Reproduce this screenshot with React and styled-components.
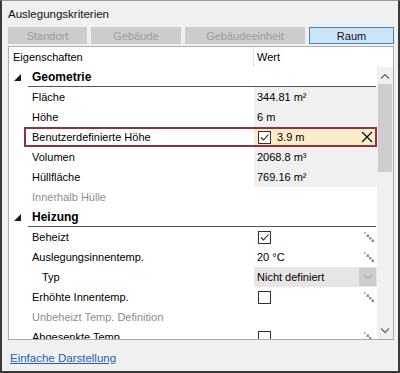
import React from "react"
import styled, { createGlobalStyle } from "styled-components"

const GlobalStyle = createGlobalStyle`
  html, body {
    margin: 0;
    padding: 0;
    background: #f0f0f0;
  }
  body {
    font-family: "Liberation Sans", Arial, sans-serif;
    font-size: 11px;
    color: #000;
  }
`

const tabs = [
  { label: "Standort" },
  { label: "Gebäude" },
  { label: "Gebäudeeinheit" },
  { label: "Raum", active: true },
]

const rows = [
  { type: "category", label: "Geometrie" },
  { label: "Fläche", value: "344.81 m²", tone: "readonly" },
  { label: "Höhe", value: "6 m", tone: "readonly" },
  { label: "Benutzerdefinierte Höhe", value: "3.9 m", tone: "edit", check: true, clear: true, selected: true },
  { label: "Volumen", value: "2068.8 m³", tone: "readonly" },
  { label: "Hüllfläche", value: "769.16 m²", tone: "readonly" },
  { label: "Innerhalb Hülle", muted: true },
  { type: "category", label: "Heizung" },
  { label: "Beheizt", check: true, link: true },
  { label: "Auslegungsinnentemp.", value: "20 °C", link: true },
  { label: "Typ", value: "Nicht definiert", tone: "combo", indent: true, combo: true },
  { label: "Erhöhte Innentemp.", check: false, link: true },
  { label: "Unbeheizt Temp. Definition", muted: true },
  { label: "Abgesenkte Temp.", check: false, link: true },
]

const Chevron = ({ up, color = "#606060" }) => (
  <svg width="10" height="6" viewBox="0 0 10 6">
    <path
      d={up ? "M1 5.5 L5 1.5 L9 5.5" : "M1 0.5 L5 4.5 L9 0.5"}
      fill="none"
      stroke={color}
      strokeWidth="1.2"
    />
  </svg>
)

const CheckMark = () => (
  <svg width="11" height="11" viewBox="0 0 11 11">
    <path d="M2 5.5 L4.5 8 L9.5 2.5" fill="none" stroke="#222" strokeWidth="1.1" />
  </svg>
)

const ClearIcon = () => (
  <svg width="12" height="12" viewBox="0 0 12 12">
    <path d="M1 1 L11 11 M11 1 L1 11" stroke="#111" strokeWidth="1.4" />
  </svg>
)

const LinkDots = () => (
  <svg width="10" height="10" viewBox="0 0 10 10">
    <rect x="0" y="0" width="2" height="2" fill="#b5b5b5" />
    <rect x="2.5" y="2.5" width="2.5" height="2.5" fill="#8f8f8f" />
    <rect x="5" y="5" width="2.5" height="2.5" fill="#9a9a9a" />
    <rect x="7.5" y="7.5" width="2.5" height="2.5" fill="#8a8a8a" />
  </svg>
)

const Expander = () => (
  <svg width="7" height="7" viewBox="0 0 7 7">
    <polygon points="7,0 7,7 0,7" fill="#1a1a1a" />
  </svg>
)

export default function App() {
  return (
    <>
      <GlobalStyle />
      <Window>
        <Title>Auslegungskriterien</Title>
        <TabBar>
          {tabs.map((t) => (
            <Tab key={t.label} $active={t.active}>
              {t.label}
            </Tab>
          ))}
        </TabBar>
        <Panel>
          <HeaderRow>
            <HeaderName>Eigenschaften</HeaderName>
            <HeaderValue>Wert</HeaderValue>
          </HeaderRow>
          <Body>
            <RowList>
              {rows.map((r) =>
                r.type === "category" ? (
                  <CategoryRow key={r.label}>
                    <Gutter>
                      <Expander />
                    </Gutter>
                    <CategoryLabel>{r.label}</CategoryLabel>
                  </CategoryRow>
                ) : (
                  <Row key={r.label} $selected={r.selected}>
                    <Gutter />
                    <Label $muted={r.muted} $indent={r.indent}>
                      {r.label}
                    </Label>
                    <Value $tone={r.tone}>
                      <ValueMain>
                        {r.check !== undefined && <Checkbox>{r.check && <CheckMark />}</Checkbox>}
                        {r.value && <span>{r.value}</span>}
                      </ValueMain>
                      {r.clear && (
                        <ClearButton>
                          <ClearIcon />
                        </ClearButton>
                      )}
                      {r.link && (
                        <LinkMark>
                          <LinkDots />
                        </LinkMark>
                      )}
                      {r.combo && (
                        <ComboButton>
                          <Chevron color="#b0b0b0" />
                        </ComboButton>
                      )}
                    </Value>
                  </Row>
                )
              )}
            </RowList>
            <ScrollBar>
              <ScrollArrow>
                <Chevron up />
              </ScrollArrow>
              <ScrollTrack>
                <Thumb />
              </ScrollTrack>
              <ScrollArrow>
                <Chevron />
              </ScrollArrow>
            </ScrollBar>
          </Body>
        </Panel>
        <Footer>
          <FooterLink href="#">Einfache Darstellung</FooterLink>
        </Footer>
      </Window>
    </>
  )
}

const Window = styled.div`
  width: 400px;
  height: 373px;
  box-sizing: border-box;
  border: 2px solid #3a3a3a;
  border-top: 1px solid #9a9a9a;
  background: #f0f0f0;
  padding: 0 4px 0 6px;
  display: flex;
  flex-direction: column;
`

const Title = styled.div`
  height: 26px;
  line-height: 26px;
  font-size: 11.5px;
  color: #111;
`

const TabBar = styled.div`
  display: grid;
  grid-template-columns: 79px 90px 120px 1fr;
  column-gap: 4px;
  height: 17px;
  margin-bottom: 2px;
`

const Tab = styled.div`
  box-sizing: border-box;
  display: flex;
  align-items: center;
  justify-content: center;
  background: ${(p) => (p.$active ? "#cce4f7" : "#cccccc")};
  border: 1px solid ${(p) => (p.$active ? "#4a82b0" : "#cccccc")};
  color: ${(p) => (p.$active ? "#111" : "#9c9c9c")};
`

const Panel = styled.div`
  height: 294px;
  box-sizing: border-box;
  border: 1px solid #acacac;
  background: #fff;
  display: flex;
  flex-direction: column;
`

const HeaderRow = styled.div`
  display: flex;
  height: 20px;
  align-items: stretch;
`

const HeaderName = styled.div`
  width: 245px;
  padding-left: 4px;
  box-sizing: border-box;
  display: flex;
  align-items: center;
  border-right: 1px solid #e3e3e3;
`

const HeaderValue = styled.div`
  padding-left: 3px;
  display: flex;
  align-items: center;
`

const Body = styled.div`
  flex: 1;
  display: flex;
  min-height: 0;
`

const RowList = styled.div`
  flex: 1;
  overflow: hidden;
`

const Gutter = styled.div`
  display: flex;
  align-items: center;
  justify-content: flex-end;
  padding-right: 7px;
`

const CategoryRow = styled.div`
  display: grid;
  grid-template-columns: 19px 1fr;
  height: 20px;
`

const CategoryLabel = styled.div`
  display: flex;
  align-items: center;
  padding-left: 4px;
  font-weight: bold;
  font-size: 12px;
  border-bottom: 1px solid #555;
  margin-right: 1px;
`

const Row = styled.div`
  position: relative;
  display: grid;
  grid-template-columns: 19px 226px 1fr;
  height: 20px;

  &::after {
    content: "";
    display: ${(p) => (p.$selected ? "block" : "none")};
    position: absolute;
    left: 15px;
    right: 0;
    top: 0;
    bottom: 0;
    border: 2px solid #93303f;
    pointer-events: none;
  }
`

const Label = styled.div`
  display: flex;
  align-items: center;
  padding-left: ${(p) => (p.$indent ? "14px" : "4px")};
  color: ${(p) => (p.$muted ? "#8d8d8d" : "#000")};
  white-space: nowrap;
`

const toneColors = {
  readonly: "#f0f0f0",
  edit: "#fcecc9",
  combo: "#e6e6e6",
}

const Value = styled.div`
  display: flex;
  align-items: center;
  justify-content: space-between;
  padding-left: 3px;
  background: ${(p) => toneColors[p.$tone] || "#fff"};
  white-space: nowrap;
`

const ValueMain = styled.div`
  display: flex;
  align-items: center;
  gap: 6px;
`

const Checkbox = styled.div`
  width: 13px;
  height: 13px;
  box-sizing: border-box;
  border: 1px solid #333;
  background: #fff;
  margin-left: 1px;
  display: flex;
  align-items: center;
  justify-content: center;
`

const ClearButton = styled.div`
  display: flex;
  margin-right: 4px;
`

const LinkMark = styled.div`
  display: flex;
  align-self: flex-start;
  margin-top: 5px;
  margin-right: 3px;
`

const ComboButton = styled.div`
  width: 17px;
  height: 18px;
  margin-right: 1px;
  background: #cccccc;
  display: flex;
  align-items: center;
  justify-content: center;
`

const ScrollBar = styled.div`
  width: 16px;
  background: #f0f0f0;
  display: flex;
  flex-direction: column;
`

const ScrollArrow = styled.div`
  height: 17px;
  display: flex;
  align-items: center;
  justify-content: center;
`

const ScrollTrack = styled.div`
  flex: 1;
`

const Thumb = styled.div`
  height: 88px;
  margin: 0 1px;
  background: #cdcdcd;
`

const Footer = styled.div`
  flex: 1;
  display: flex;
  align-items: center;
  padding: 4px 0 0 2px;
`

const FooterLink = styled.a`
  color: #1f5fb5;
  text-decoration: underline;
  font-size: 11.5px;
`
